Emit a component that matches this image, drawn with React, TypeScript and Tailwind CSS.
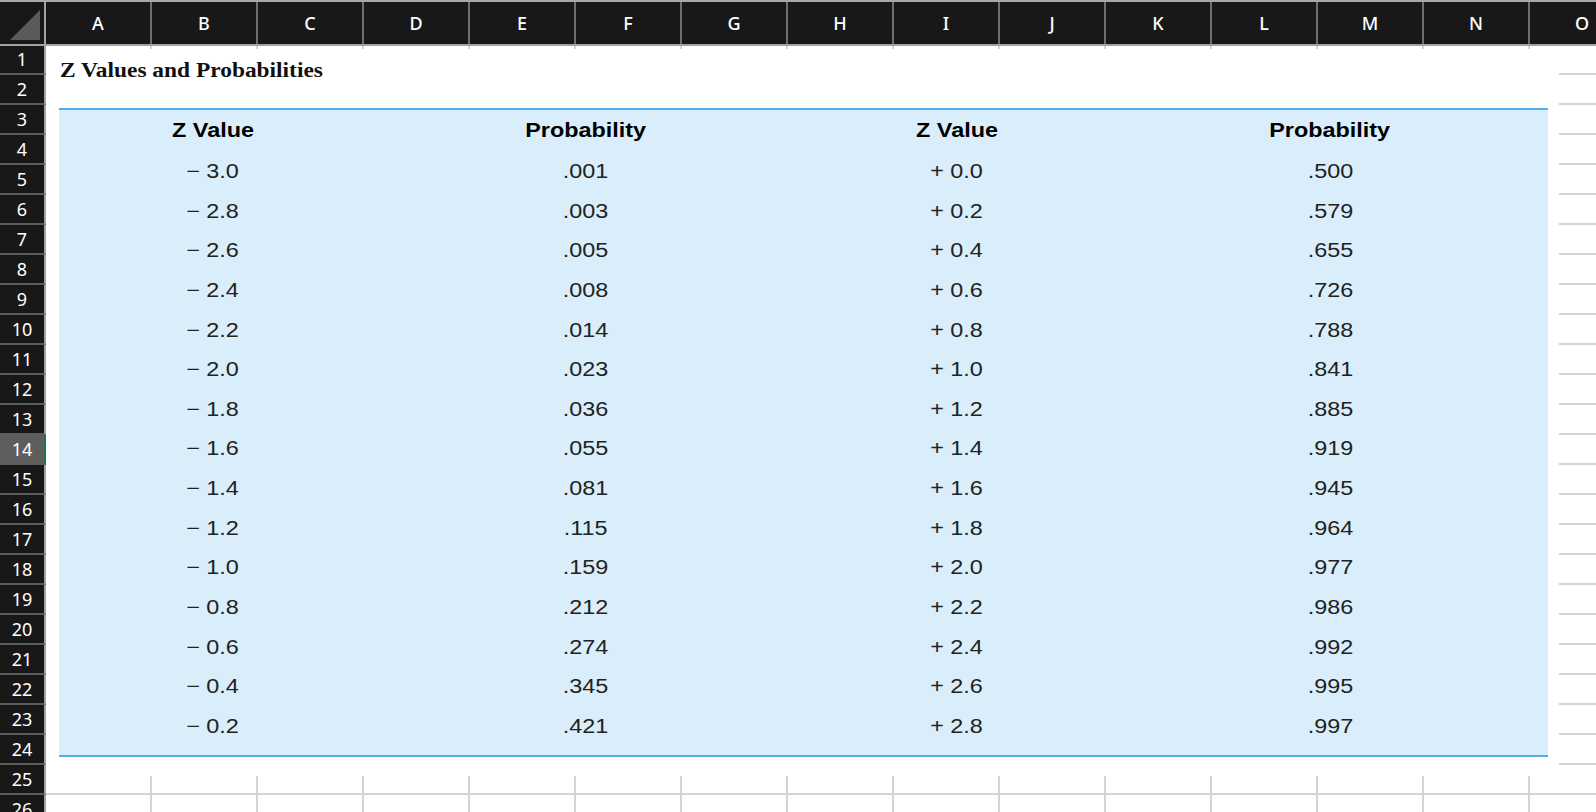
const COLS = ["A", "B", "C", "D", "E", "F", "G", "H", "I", "J", "K", "L", "M", "N", "O"]
const ROWS = Array.from({ length: 26 }, (_, i) => i + 1)
const ACTIVE_ROW = 14

const DATA: [string, string, string, string][] = [
  ["− 3.0", ".001", "+ 0.0", ".500"],
  ["− 2.8", ".003", "+ 0.2", ".579"],
  ["− 2.6", ".005", "+ 0.4", ".655"],
  ["− 2.4", ".008", "+ 0.6", ".726"],
  ["− 2.2", ".014", "+ 0.8", ".788"],
  ["− 2.0", ".023", "+ 1.0", ".841"],
  ["− 1.8", ".036", "+ 1.2", ".885"],
  ["− 1.6", ".055", "+ 1.4", ".919"],
  ["− 1.4", ".081", "+ 1.6", ".945"],
  ["− 1.2", ".115", "+ 1.8", ".964"],
  ["− 1.0", ".159", "+ 2.0", ".977"],
  ["− 0.8", ".212", "+ 2.2", ".986"],
  ["− 0.6", ".274", "+ 2.4", ".992"],
  ["− 0.4", ".345", "+ 2.6", ".995"],
  ["− 0.2", ".421", "+ 2.8", ".997"],
]

function Stretch({ children, bold }: { children: React.ReactNode; bold?: boolean }) {
  return (
    <span
      className={`inline-block scale-x-[1.17] ${bold ? "font-bold text-black" : "text-[#222]"}`}
    >
      {children}
    </span>
  )
}

function ZTable() {
  return (
    <div className="absolute left-[46px] top-[49px] h-[727px] w-[1513px] bg-white">
      <div className="pl-[14px] pt-[9px]">
        <h1 className="origin-left scale-x-[1.17] font-['Liberation_Serif',serif] text-[20px] font-bold leading-[24px] text-[#111]">
          Z Values and Probabilities
        </h1>
      </div>
      <div className="ml-[13px] mt-[26px] h-[649px] w-[1489px] border-y-2 border-[#4fb0e6] bg-[#d9eefa] font-['Liberation_Sans',Arial,sans-serif] text-[20px]">
        <div className="grid h-[40px] grid-cols-[308px_437px_306px_440px] items-center text-center leading-[40px]">
          <div><Stretch bold>Z Value</Stretch></div>
          <div><Stretch bold>Probability</Stretch></div>
          <div><Stretch bold>Z Value</Stretch></div>
          <div><Stretch bold>Probability</Stretch></div>
        </div>
        {DATA.map((row) => (
          <div
            key={row[0]}
            className="grid h-[39.64px] grid-cols-[308px_437px_306px_440px] text-center leading-[42px]"
          >
            {row.map((cell, i) => (
              <div key={i}>
                <Stretch>{cell}</Stretch>
              </div>
            ))}
          </div>
        ))}
      </div>
    </div>
  )
}

export default function App() {
  return (
    <div className="relative h-[812px] w-[1596px] overflow-hidden bg-white font-['Noto_Sans',sans-serif]">
      {/* column headers */}
      <div className="flex h-[46px] border-y-2 border-t-[#a9a9a9] border-b-[#a3a3a3] bg-[#181818]">
        <div className="relative w-[46px] shrink-0 border-r-2 border-[#a3a3a3]">
          <svg className="absolute left-[10px] top-[8px]" width="30" height="30" viewBox="0 0 30 30">
            <polygon points="30,0 30,30 0,30" fill="#5b5b5b" />
          </svg>
        </div>
        {COLS.map((c) => (
          <div
            key={c}
            className="flex w-[106px] shrink-0 items-center justify-center border-r-2 border-[#6e6e6e] text-[18px] font-medium text-white"
          >
            {c}
          </div>
        ))}
      </div>

      {/* rows */}
      {ROWS.map((r) => (
        <div key={r} className={`flex ${r === 1 ? "h-[29px]" : "h-[30px]"}`}>
          <div
            className={`flex w-[46px] shrink-0 items-center justify-center border-b-2 border-r-2 border-b-[#5c5c5c] text-[18px] text-white ${
              r === ACTIVE_ROW ? "border-r-[#217346] bg-[#5e5e5e]" : "border-r-[#a3a3a3] bg-[#181818]"
            }`}
          >
            {r}
          </div>
          {COLS.map((c) => (
            <div key={c} className="w-[106px] shrink-0 border-b-2 border-r-2 border-[#d4d4d4]" />
          ))}
        </div>
      ))}

      <ZTable />
    </div>
  )
}
